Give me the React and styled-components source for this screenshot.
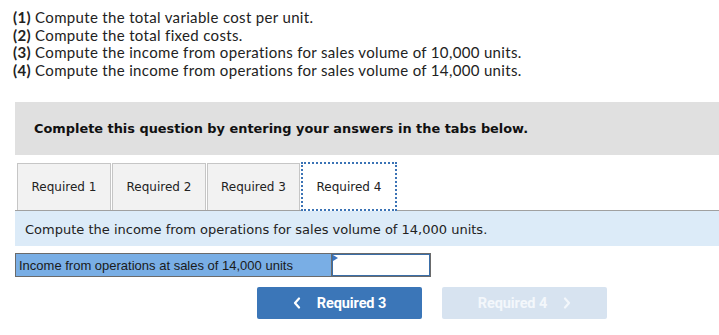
import React from "react";
import styled, { createGlobalStyle } from "styled-components";

const Global = createGlobalStyle`
  html, body { margin: 0; padding: 0; background: #fff; }
  body { width: 719px; height: 335px; overflow: hidden; }
`;

const Page = styled.div`
  width: 719px;
`;

const Intro = styled.div`
  padding: 9px 0 0 13px;
  font-family: Lato, "Open Sans", sans-serif;
  font-size: 15px;
  letter-spacing: 0.33px;
  line-height: 17.6px;
  color: #222;
`;

const Line = styled.div`
  white-space: nowrap;
  b { font-weight: 700; }
`;

const Banner = styled.div`
  margin: 23px 0 0 15px;
  height: 53px;
  background: #e0e0e0;
  display: flex;
  align-items: center;
  padding-left: 19px;
  font-family: "DejaVu Sans", Verdana, sans-serif;
  font-weight: 700;
  font-size: 12.9px;
  color: #111;
`;

const Tabs = styled.div`
  margin: 8px 0 0 17px;
  display: flex;
  gap: 1px;
  height: 47px;
`;

const Tab = styled.div`
  box-sizing: border-box;
  width: ${(p) => p.$w}px;
  height: ${(p) => (p.$active ? 49 : 47)}px;
  margin-top: ${(p) => (p.$active ? -1 : 0)}px;
  display: flex;
  align-items: center;
  justify-content: center;
  font-family: "DejaVu Sans", Verdana, sans-serif;
  font-size: 12px;
  color: #222;
  background: ${(p) => (p.$active ? "#fff" : "#f2f2f2")};
  border: ${(p) => (p.$active ? "2px dotted #3b73b5" : "1px solid #c6c6c6")};
  border-bottom: ${(p) => (p.$active ? "2px dotted #3b73b5" : "none")};
  position: relative;
  z-index: ${(p) => (p.$active ? 1 : 0)};
`;

const Band = styled.div`
  box-sizing: border-box;
  margin-left: 15px;
  border-top: 1px solid #a0a0a0;
  height: 36px;
  background: #dcebf8;
  display: flex;
  align-items: center;
  padding: 2px 0 0 10px;
  font-family: "DejaVu Sans", Verdana, sans-serif;
  font-size: 13px;
  color: #222;
`;

const AnswerRow = styled.div`
  margin: 7px 0 0 15px;
  display: flex;
  height: 24px;
`;

const Label = styled.div`
  box-sizing: border-box;
  width: 316px;
  height: 24px;
  background: #79aee5;
  border: 1px solid #6b6b6b;
  border-right: none;
  display: flex;
  align-items: center;
  padding-left: 3px;
  font-family: "Liberation Sans", Arial, sans-serif;
  font-size: 13px;
  color: #1a1a1a;
`;

const InputWrap = styled.div`
  position: relative;
  box-sizing: border-box;
  width: 100px;
  height: 24px;
  border: 1px solid #6b6b6b;
`;

const Input = styled.input`
  box-sizing: border-box;
  width: 100%;
  height: 100%;
  margin: 0;
  border: 1px solid #3a6ea8;
  background: #fff;
  outline: none;
  padding: 0 4px;
`;

const Flag = styled.span`
  position: absolute;
  left: 1px;
  top: 1px;
  width: 0;
  height: 0;
  border-top: 3px solid transparent;
  border-bottom: 3px solid transparent;
  border-left: 5px solid #3a74c0;
`;

const NavRow = styled.div`
  margin: 10px 0 0 257px;
  display: flex;
  gap: 20px;
`;

const NavButton = styled.div`
  box-sizing: border-box;
  width: 165px;
  height: 32px;
  border-radius: 2px;
  background: ${(p) => (p.$disabled ? "#d7e3f0" : "#3b76b8")};
  color: ${(p) => (p.$disabled ? "#f3f7fb" : "#fff")};
  display: flex;
  align-items: center;
  justify-content: center;
  gap: 16px;
  font-family: Roboto, "Liberation Sans", sans-serif;
  font-weight: 700;
  font-size: 14.5px;
  letter-spacing: -0.1px;
`;

const Chevron = ({ dir }) => (
  <svg width="8" height="12" viewBox="0 0 8 12">
    <path
      d={dir === "left" ? "M6 1.5 L2 6 L6 10.5" : "M2 1.5 L6 6 L2 10.5"}
      fill="none"
      stroke="currentColor"
      strokeWidth="2.2"
      strokeLinecap="round"
      strokeLinejoin="round"
    />
  </svg>
);

export default function App() {
  return (
    <Page>
      <Global />
      <Intro>
        <Line><b>(1)</b> Compute the total variable cost per unit.</Line>
        <Line><b>(2)</b> Compute the total fixed costs.</Line>
        <Line><b>(3)</b> Compute the income from operations for sales volume of 10,000 units.</Line>
        <Line><b>(4)</b> Compute the income from operations for sales volume of 14,000 units.</Line>
      </Intro>
      <Banner>Complete this question by entering your answers in the tabs below.</Banner>
      <Tabs>
        <Tab $w={94}>Required 1</Tab>
        <Tab $w={94}>Required 2</Tab>
        <Tab $w={93}>Required 3</Tab>
        <Tab $w={96} $active>Required 4</Tab>
      </Tabs>
      <Band>Compute the income from operations for sales volume of 14,000 units.</Band>
      <AnswerRow>
        <Label>Income from operations at sales of 14,000 units</Label>
        <InputWrap>
          <Input type="text" />
          <Flag />
        </InputWrap>
      </AnswerRow>
      <NavRow>
        <NavButton>
          <Chevron dir="left" />
          <span>Required 3</span>
        </NavButton>
        <NavButton $disabled>
          <span>Required 4</span>
          <Chevron dir="right" />
        </NavButton>
      </NavRow>
    </Page>
  );
}
